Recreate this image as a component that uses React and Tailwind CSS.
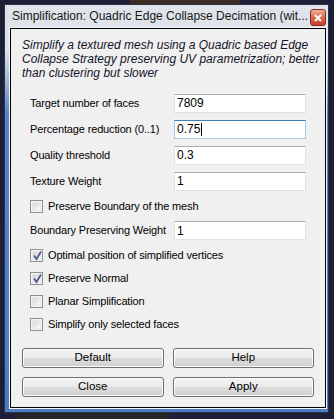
import React from "react";

const font = { fontFamily: '"Liberation Sans", Arial, sans-serif' };

const TextRow = ({ label, value, focused, h = "h-[26px]" }) => (
  <div className={`flex items-center ${h}`}>
    <span className="flex-1 text-[11px] tracking-[-0.15px] text-black whitespace-nowrap">{label}</span>
    <div
      className={`w-[132px] h-[19px] bg-white border flex items-center pl-[2px] text-[12px] text-black ${
        focused
          ? "border-[#a9cbe6] border-t-[#3f7fb3]"
          : "border-[#dde1e7] border-t-[#abadb3]"
      }`}
    >
      <span className={focused ? "border-r border-black pr-[1px] leading-[13px]" : ""}>
        {value}
      </span>
    </div>
  </div>
);

const Check = ({ label, checked, h }) => (
  <div className={`flex items-center gap-[5px] ${h}`}>
    <div className="w-[13px] h-[13px] border border-[#8f8f8f] bg-[#f4f4f4] p-[1px]">
      <div className="w-full h-full bg-[linear-gradient(135deg,#d6d6d6,#f8f8f8)] border border-[#e8e8e8] relative">
        {checked && (
          <svg
            className="absolute left-[-1px] top-[-2px]"
            width="11"
            height="11"
            viewBox="0 0 11 11"
          >
            <path
              d="M2 5.5 L4.5 9 L9 1.5"
              fill="none"
              stroke="#4a5d93"
              strokeWidth="1.8"
            />
          </svg>
        )}
      </div>
    </div>
    <span className="text-[11px] tracking-[-0.15px] text-black whitespace-nowrap">{label}</span>
  </div>
);

const Btn = ({ children }) => (
  <button className="h-[20px] rounded-[3px] border border-[#707070] bg-[linear-gradient(#f3f3f3_0%,#ebebeb_50%,#dddddd_50%,#cfcfcf_100%)] shadow-[inset_0_0_0_1px_#fbfbfb] text-[11.5px] text-black leading-none">
    {children}
  </button>
);

export default function App() {
  return (
    <div
      className="w-[334px] h-[419px] bg-[#1c1f35] overflow-hidden flex flex-col"
      style={font}
    >
      {/* desktop strip above window */}
      <div className="h-[4px] flex">
        <div className="w-[130px]" />
        <div className="w-[110px] bg-[#3b2d22]" />
      </div>
      <div className="flex">
        <div className="w-[4px]" />
        {/* window */}
        <div className="w-[325px] h-[409px] border border-[#2a3148] bg-[linear-gradient(#dfe4ea_0px,#dde3ea_45px,#5584c6_110px,#4c7dc3_100%)] flex flex-col pl-[4px] pr-[1px] pb-[3px]">
          <div className="h-[22px] flex items-center pl-[3px] pr-[1px]">
            <span className="flex-1 text-[12px] text-[#161616] whitespace-nowrap overflow-hidden">
              Simplification: Quadric Edge Collapse Decimation (wit...
            </span>
            <div className="w-[16px] h-[17px] mt-[3px] rounded-[3px] border border-[#8a2c1c] bg-[linear-gradient(#f0b29c,#d86a4c_50%,#c4412a)] flex items-center justify-center">
              <svg width="8" height="8" viewBox="0 0 8 8">
                <path d="M1 1 L7 7 M7 1 L1 7" stroke="#ffffff" strokeWidth="2" />
              </svg>
            </div>
          </div>
          <div className="flex-1 border border-[#f4f6f8]">
            <div className="h-full border border-black bg-[#f0f0f0] flex flex-col">
              <p className="pt-[9px] pl-[11px] text-[12px] leading-[14px] italic text-[#14142a]">
                Simplify a textured mesh using a Quadric based Edge
                <br />
                Collapse Strategy preserving UV parametrization; better
                <br />
                than clustering but slower
              </p>
              <div className="mt-[10px] px-[19px] flex flex-col">
                <TextRow label="Target number of faces" value="7809" />
                <TextRow label="Percentage reduction (0..1)" value="0.75" focused />
                <TextRow label="Quality threshold" value="0.3" />
                <TextRow label="Texture Weight" value="1" />
                <Check label="Preserve Boundary of the mesh" h="h-[24px]" />
                <TextRow label="Boundary Preserving Weight" value="1" h="h-[25px]" />
                <Check label="Optimal position of simplified vertices" checked h="h-[24px]" />
                <Check label="Preserve Normal" checked h="h-[23px]" />
                <Check label="Planar Simplification" h="h-[23px]" />
                <Check label="Simplify only selected faces" h="h-[22px]" />
              </div>
              <div className="mt-[13px] px-[11px] grid grid-cols-2 gap-x-[9px] gap-y-[9px]">
                <Btn>Default</Btn>
                <Btn>Help</Btn>
                <Btn>Close</Btn>
                <Btn>Apply</Btn>
              </div>
            </div>
          </div>
        </div>
      </div>
      <div className="flex-1 flex">
        <div className="w-[18px]" />
        <div className="w-[152px] bg-[#262628]" />
      </div>
    </div>
  );
}
